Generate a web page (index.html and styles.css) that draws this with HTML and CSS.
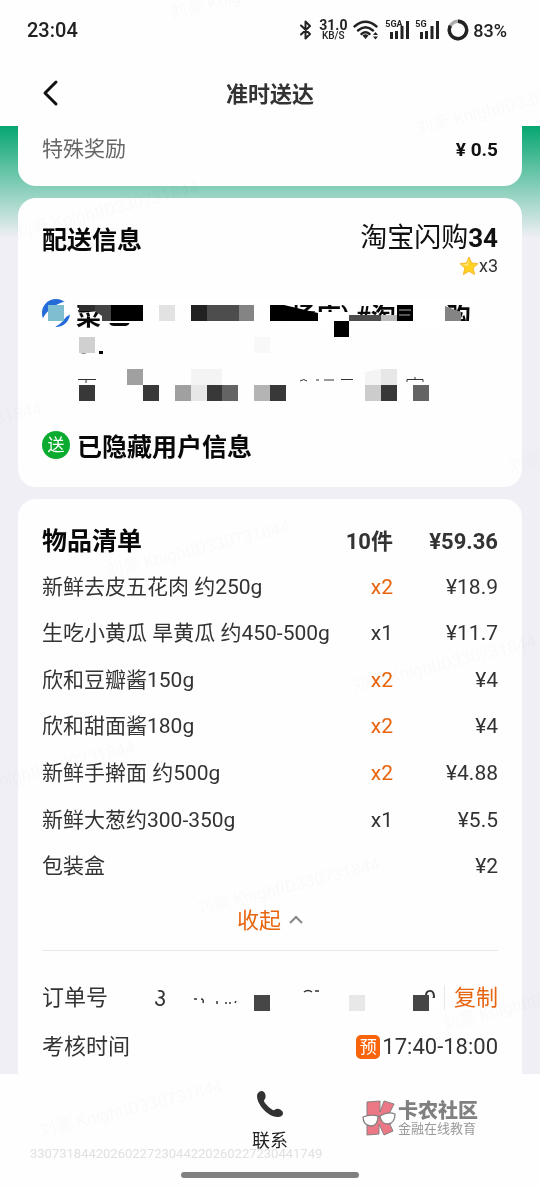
FILE: index.html
```html
<!DOCTYPE html>
<html lang="zh-CN">
<head>
<meta charset="utf-8">
<meta name="viewport" content="width=device-width, initial-scale=1">
<title>准时送达</title>
<link rel="stylesheet" href="styles.css">
</head>
<body>
<header class="top">
  <div class="status">
    <span class="clock">23:04</span>
    <div class="status-icons">
      <svg width="14" height="20" viewBox="0 0 14 20" fill="none" stroke="#222" stroke-width="2" stroke-linejoin="round" stroke-linecap="round"><path d="M2 5.500 11 14 6.500 18.500V1.500L11 6 2 14.500"/></svg>
      <span class="speed"><b>31.0</b><small>KB/S</small></span>
      <svg width="26" height="20" viewBox="0 0 26 20" fill="none" stroke="#222" stroke-width="2.400" stroke-linecap="round"><path d="M1.500 6.500Q12.500-3 23.500 6.500M5 10.500Q12.500 4 20 10.500M8.500 14Q12.500 10.500 16.500 14"/><path fill="#222" stroke="none" d="M9.500 15.500Q12.500 13 15.500 15.500L12.500 19ZM20 15 22.500 12 25 15ZM20 16.500h5L22.500 19.500Z"/></svg>
      <span class="signal"><i class="net">5GA</i><svg width="24" height="20" viewBox="0 0 24 20" fill="#222"><path d="M5 12h3v7H5zM10 11h3v8h-3zM15.500 6h3v13h-3zM21 1h3v18h-3z"/></svg></span>
      <span class="signal"><i class="net">5G</i><svg width="24" height="20" viewBox="0 0 24 20" fill="#222"><path d="M5 12h3v7H5zM10 11h3v8h-3zM15.500 6h3v13h-3zM21 1h3v18h-3z"/></svg></span>
      <svg class="battery" width="22" height="22" viewBox="0 0 22 22" fill="none" stroke-width="3.400"><circle cx="11" cy="11" r="8.700" stroke="#aaa"/><path stroke="#222" d="M11 2.300A8.700 8.700 0 1 1 3.400 6.700"/></svg>
      <span class="percent">83%</span>
    </div>
  </div>
  <div class="titlebar">
    <button class="back" aria-label="返回"><svg width="18" height="28" viewBox="0 0 18 28" fill="none" stroke="#111" stroke-width="3" stroke-linecap="round" stroke-linejoin="round"><path d="M14 3 3 14 14 25"/></svg></button>
    <h1>准时送达</h1>
  </div>
</header>

<main class="content">
  <section class="card reward">
    <span class="muted">特殊奖励</span><strong>¥ 0.5</strong>
  </section>

  <section class="card delivery">
    <div class="delivery-head">
      <h2>配送信息</h2>
      <div class="source">
        <div class="platform">淘宝闪购<b>34</b></div>
        <div class="stars"><svg width="20" height="20" viewBox="0 0 20 20"><path d="M10 1 12.600 7 19 7.600 14.200 12 15.600 18.500 10 15.300 4.400 18.500 5.800 12 1 7.600 7.400 7Z" fill="#ffd21f" stroke="#f9b832" stroke-linejoin="round"/><path d="M10 2.500 8 8 2.500 8.200 9 10Z" fill="#ffe98a"/></svg>x3</div>
      </div>
    </div>
    <svg class="redacted" width="440" height="106" viewBox="42 299 440 106">
      <circle cx="56" cy="313" r="14" fill="#246bd8"/>
      <path d="M41 323Q46 307 66 301L74 312 66 317Q60 326 52 328L42 329Z" fill="#fff"/>
      <path fill="#7fbed1" d="M48 305h16v16H48z"/>
      <g class="store-name">
        <text x="76" y="325">菜</text><text x="106" y="324">已</text>
        <text x="291" y="325">场店)</text><text x="356" y="325">#淘宝闪购</text>
      </g>
      <g fill="#fff">
        <path d="M77 299h400v6H77zM102 321h30v2h-30zM286 312h63v16h-63zM349 321h128v8H349zM413 305h30v16h-30zM443 305h4l12 16h-16z"/>
      </g>
      <path fill="#2e2e2e" d="M79 305h16v6H79z"/><path fill="#444" d="M95 305h16v16h-9v-5l-7-5z"/>
      <path d="M111 305h32v16h-32zM270 305h14l34 8v8h-48zM334 321h15v16h-15zM397 305h16v16h-16z"/>
      <path fill="#e2e2e2" d="M159 305h16v16h-16z"/><path fill="#222" d="M191 305h16v16h-16z"/>
      <path fill="#4d4d4d" d="M207 305h32v16h-32zM349 315h32v6h-32z"/><path fill="#848484" d="M239 305h15v16h-15zM445 306l16 6v9h-16z"/>
      <path fill="#bbb" d="M381 315h16v6h-16z"/><path stroke="#aaa" d="M399 310h12M399 315h11"/>
      <path d="M79 352q5 3 9 0zM99 351h4v3h-4z"/>
      <path fill="#d0d0d0" d="M79 337h16v16H79z"/><path fill="#f8f8f8" d="M254 337h16v16h-16z"/>
      <path fill="none" stroke="#333" d="M78 379.500h18M86 380v3M300 381q4-3 7 0M316 380h3M324 380h10M341 379.500h12M394 378v3M407 382v-2.500h16v2.500M415 377v3"/>
      <path fill="#a0a0a0" d="M127 369h16v16h-16zM175 385h16v16h-16z"/>
      <path fill="#f4f4f4" d="M191 369h31v16h-31zM365 372l16-3v16h-16z"/><path fill="#e7e7e7" d="M381 369h16v16h-16zM191 385h16v16h-16z"/>
      <path fill="#383838" d="M79 385h16v16H79zM143 385h16v16h-16zM207 385h15v16h-15zM270 385h16v16h-16zM381 385h16v16h-16z"/>
      <path fill="#646464" d="M222 385h16v16h-16zM413 385h16v16h-16z"/><path fill="#b4b4b4" d="M254 385h16v16h-16z"/><path fill="#ccc" d="M365 385h16v16h-16z"/>
    </svg>
    <div class="receiver"><span class="tag-send">送</span><h2>已隐藏用户信息</h2></div>
  </section>

  <section class="card goods">
    <table class="items">
      <thead><tr><th class="name">物品清单</th><th>10件</th><th>¥59.36</th></tr></thead>
      <tbody>
        <tr><td>新鲜去皮五花肉 约250g</td><td class="multi">x2</td><td>¥18.9</td></tr>
        <tr><td>生吃小黄瓜 旱黄瓜 约450-500g</td><td>x1</td><td>¥11.7</td></tr>
        <tr><td>欣和豆瓣酱150g</td><td class="multi">x2</td><td>¥4</td></tr>
        <tr><td>欣和甜面酱180g</td><td class="multi">x2</td><td>¥4</td></tr>
        <tr><td>新鲜手擀面 约500g</td><td class="multi">x2</td><td>¥4.88</td></tr>
        <tr><td>新鲜大葱约300-350g</td><td>x1</td><td>¥5.5</td></tr>
        <tr><td>包装盒</td><td></td><td>¥2</td></tr>
      </tbody>
    </table>
    <button class="collapse">收起<svg width="14" height="10" viewBox="0 0 14 10" fill="none" stroke="#888" stroke-width="2"><path d="M1 8 7 2 13 8"/></svg></button>
    <div class="meta">
      <div class="meta-row">
        <span>订单号</span>
        <span class="order">
          <svg width="286" height="30" viewBox="154 983 286 30">
            <text class="digit" x="154" y="1006">3</text><text class="digit" x="424" y="1006">9</text>
            <path fill="#fff" d="M154 990h3l4 4-4 5h-3zM422 998h16v12h-16z"/>
            <path fill="none" stroke="#333" stroke-width="1.500" d="M194 999h3M201 999q3 0 2 4M217 1001v3M226 1002v2M230 1002v2M235 1003l1-2M304 992q4-3 8 0M315 991h4"/>
            <path fill="#464646" d="M254 995h16v16h-16zM413 995h16v16h-16z"/><path fill="#e8e8e8" d="M349 995h16v16h-16z"/>
          </svg>
          <button class="copy">复制</button>
        </span>
      </div>
      <div class="meta-row"><span>考核时间</span><span class="time"><span class="tag-book">预</span>17:40-18:00</span></div>
    </div>
  </section>
</main>

<footer class="bottom">
  <button class="contact">
    <svg width="28" height="28" viewBox="0 0 28 28" fill="#333"><path d="M2 3Q5-.5 8.500 2.500Q10.500 6 9 9Q7 10.500 9 13Q12 17 16 19.500Q18 21 20 19Q22 18 25 20Q28 22 26.500 25Q25 27.500 21 27Q13 26 7 19Q1 12 1 6Q1 4 2 3Z"/></svg>
    联系
  </button>
  <div class="home-indicator"></div>
  <div class="trace">3307318442026022723044220260227230441749</div>
  <div class="brand">
    <svg width="34" height="36" viewBox="0 0 34 36"><path d="M5 2 18 1V12L22 1 32 4 25 18 31 31 22 35 17 24V34L5 35Z" fill="#ed7885" stroke="#858080"/><path d="M1 17Q8 14 16 16Q16 26 9 26Q1 25 1 17ZM18 16Q26 11 33 14Q33 23 26 24Q19 24 18 16ZM16 17l2-1" fill="#fff" stroke="#858080" stroke-width="1.300"/></svg>
    <div><b>卡农社区</b><small>金融在线教育</small></div>
  </div>
</footer>

<svg class="watermark" width="540" height="1188" viewBox="0 0 540 1188" aria-hidden="true">
  <text transform="translate(172 19) rotate(-14)">刘豪 KnightID330731844</text>
  <text transform="translate(418 134) rotate(-14)">刘豪 KnightID330731844</text>
  <text transform="translate(17 238) rotate(-14)">刘豪 KnightID330731844</text>
  <text transform="translate(-140 459) rotate(-14)">刘豪 KnightID330731844</text>
  <text transform="translate(510 473) rotate(-14)">刘豪 KnightID330731844</text>
  <text transform="translate(108 577) rotate(-14)">刘豪 KnightID330731844</text>
  <text transform="translate(354 692) rotate(-14)">刘豪 KnightID330731844</text>
  <text transform="translate(-47 798) rotate(-14)">刘豪 KnightID330731844</text>
  <text transform="translate(198 915) rotate(-14)">刘豪 KnightID330731844</text>
  <text transform="translate(444 1030) rotate(-14)">刘豪 KnightID330731844</text>
  <text transform="translate(41 1137) rotate(-14)">刘豪 KnightID330731844</text>
</svg>
</body>
</html>
```
FILE: styles.css
```css
* { box-sizing: border-box; }

body {
  margin: 0;
  height: 100vh;
  position: relative;
  display: flex;
  flex-direction: column;
  overflow: hidden;
  background: #f0eff5;
  color: #333;
  font: 21px/25px Roboto, "Noto Sans CJK SC", sans-serif;
}

h1, h2 { margin: 0; }
h2 { font-size: 25px; line-height: 32px; color: #080808; }
button { border: 0; padding: 0; background: none; font: inherit; color: inherit; }
svg { display: block; flex: none; }

.top { background: #fefefe; padding-bottom: 8px; }
.status {
  height: 60px;
  padding: 0 33px 0 27px;
  display: flex;
  align-items: center;
  justify-content: space-between;
}
.clock { font-size: 20px; font-weight: 500; color: #222; }
.status-icons { display: flex; align-items: center; gap: 6px; color: #222; }
.speed { width: 28px; text-align: center; }
.speed b { display: block; font-size: 14px; line-height: 11px; }
.speed small { display: block; font-size: 10px; font-weight: 500; line-height: 9px; }
.signal { position: relative; }
.net { position: absolute; top: 0; left: 0; font: bold 9px/9px Roboto, sans-serif; }
.percent { font-size: 18px; font-weight: 500; }
.battery { margin: 0 -2px 0 2px; }

.titlebar {
  height: 58px;
  padding: 0 42px;
  display: grid;
  grid-template-columns: 40px 1fr 40px;
  align-items: center;
}
.back { height: 40px; padding-top: 8px; }
h1 { padding-top: 12px; text-align: center; font-size: 22px; line-height: 32px; }

.content {
  flex: 1;
  min-height: 0;
  overflow: hidden;
  padding: 0 18px;
  background: linear-gradient(#06a671, #f0eff5 112px) no-repeat;
}
.card { background: #fefefe; border-radius: 18px; padding: 22px 24px 24px; margin-bottom: 12px; }

.reward {
  height: 60px;
  padding: 10px 24px 24px;
  border-radius: 0 0 18px 18px;
  display: flex;
  align-items: center;
  justify-content: space-between;
}
.reward strong { font-size: 19px; color: #111; }
.muted { color: #666; }

.delivery-head { display: flex; justify-content: space-between; margin-bottom: 23px; }
.delivery-head h2 { line-height: 42px; }
.source { text-align: right; }
.platform { font-size: 27px; line-height: 36px; color: #111; }
.platform b { font-size: 26px; }
.stars { display: flex; justify-content: flex-end; font-size: 18px; line-height: 20px; }
.redacted { margin-bottom: 26px; }
.store-name { font-size: 25px; font-weight: bold; fill: #080808; }
.receiver { display: flex; gap: 7px; }
.receiver h2 { line-height: 34px; margin-bottom: -2px; }
.tag-send {
  width: 28px;
  height: 28px;
  border-radius: 50%;
  background: #0bab30;
  color: #fff;
  font-size: 17px;
  line-height: 28px;
  text-align: center;
}

.goods { padding-top: 19px; }
.items { width: 100%; border-collapse: collapse; }
.items tbody { height: 326px; }
.items th, .items td { height: 46px; padding: 0; text-align: right; white-space: nowrap; }
.items tr:nth-child(even) td { height: 47px; }
.items th { font-size: 22px; }
.items th:nth-child(3) { width: 105px; }
.items .name { font-size: 25px; color: #080808; }
.items .name, .items td:first-child { text-align: left; }
.items .multi, .collapse, .copy { color: #e8650f; }

.collapse {
  width: 100%;
  height: 60px;
  display: flex;
  align-items: center;
  justify-content: center;
  gap: 8px;
  font-size: 22px;
}
.meta { border-top: 1px solid #e8e8e8; padding-top: 22px; font-size: 22px; }
.meta-row { height: 49px; display: flex; align-items: center; justify-content: space-between; }
.order, .time { display: flex; align-items: center; }
.order { gap: 4px; }
.digit { font-size: 22px; fill: #333; }
.copy { border-left: 1px solid #e8e8e8; padding-left: 9px; }
.tag-book {
  width: 24px;
  height: 24px;
  margin-right: 2px;
  border-radius: 5px;
  background: #f8640b;
  color: #fff;
  font-size: 17px;
  line-height: 24px;
  text-align: center;
}

.bottom {
  position: relative;
  padding: 16px 0 10px;
  display: flex;
  flex-direction: column;
  align-items: center;
  background: #fefefe;
}
.contact {
  display: flex;
  flex-direction: column;
  align-items: center;
  gap: 10px;
  font-size: 18px;
  line-height: 26px;
  color: #222;
}
.home-indicator { width: 33%; height: 6px; margin-top: 18px; border-radius: 3px; background: #808080; }
.trace { position: absolute; left: 30px; bottom: 25px; font-size: 13px; line-height: 18px; color: #e2e2e2; mix-blend-mode: multiply; }
.brand { position: absolute; right: 62px; bottom: 52px; display: flex; align-items: center; gap: 2px; color: #808080; }
.brand b { display: block; font-size: 20px; font-weight: 900; line-height: 22px; }
.brand small { display: block; font-size: 13px; line-height: 14px; color: #999; }

.watermark { position: absolute; left: 0; top: 0; pointer-events: none; }
.watermark text { font-size: 17px; fill: #000; fill-opacity: .02; }
```
